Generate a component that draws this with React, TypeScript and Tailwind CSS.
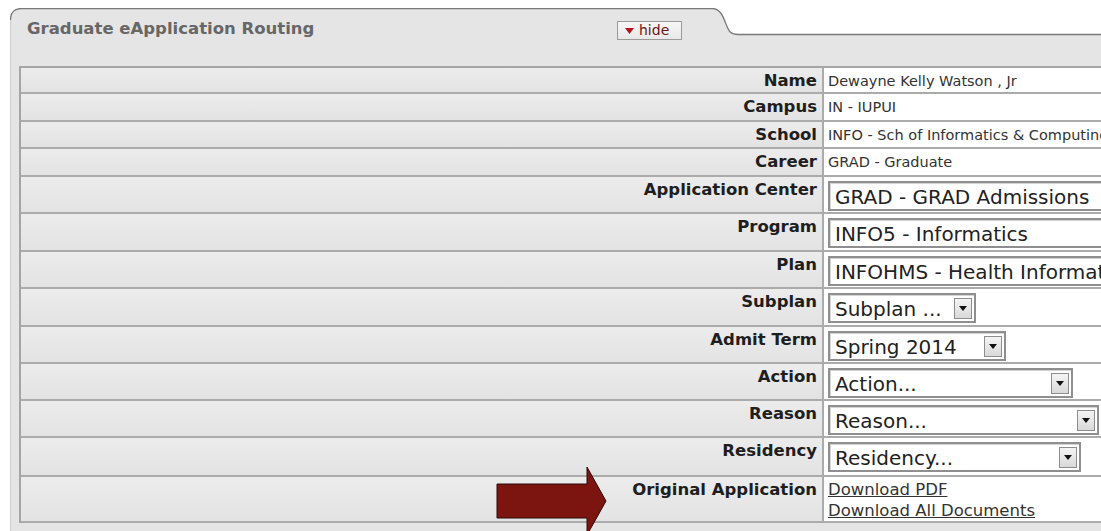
import React from "react";

type Row = {
  label: string;
  height: string;
  kind: "text" | "select" | "links";
  value?: string;
  selectWidth?: string;
};

const rows: Row[] = [
  { label: "Name", height: "h-[26px]", kind: "text", value: "Dewayne Kelly Watson , Jr" },
  { label: "Campus", height: "h-[28px]", kind: "text", value: "IN - IUPUI" },
  { label: "School", height: "h-[27px]", kind: "text", value: "INFO - Sch of Informatics & Computing" },
  { label: "Career", height: "h-[28px]", kind: "text", value: "GRAD - Graduate" },
  { label: "Application Center", height: "h-[37px]", kind: "select", value: "GRAD - GRAD Admissions", selectWidth: "w-[320px]" },
  { label: "Program", height: "h-[38px]", kind: "select", value: "INFO5 - Informatics", selectWidth: "w-[320px]" },
  { label: "Plan", height: "h-[37px]", kind: "select", value: "INFOHMS - Health Informatics", selectWidth: "w-[320px]" },
  { label: "Subplan", height: "h-[38px]", kind: "select", value: "Subplan ...", selectWidth: "w-[148px]" },
  { label: "Admit Term", height: "h-[37px]", kind: "select", value: "Spring 2014", selectWidth: "w-[178px]" },
  { label: "Action", height: "h-[37px]", kind: "select", value: "Action...", selectWidth: "w-[245px]" },
  { label: "Reason", height: "h-[37px]", kind: "select", value: "Reason...", selectWidth: "w-[271px]" },
  { label: "Residency", height: "h-[39px]", kind: "select", value: "Residency...", selectWidth: "w-[253px]" },
  { label: "Original Application", height: "h-[46px]", kind: "links" },
];

function DropArrow() {
  return (
    <div className="flex h-[21px] w-[18px] shrink-0 items-center justify-center border border-[#8d8d8d] bg-gradient-to-b from-[#f4f4f4] to-[#d9d9d9]">
      <svg width="8" height="5" viewBox="0 0 8 5">
        <path d="M0 0 L8 0 L4 5 Z" fill="#111" />
      </svg>
    </div>
  );
}

function SelectBox({ value, width }: { value: string; width: string }) {
  return (
    <div
      className={`${width} flex h-[30px] items-center justify-between overflow-hidden border-2 border-[#8f8f8f] bg-white pl-[5px] pr-[2px] shadow-[inset_1px_1px_0_#d4d4d4]`}
    >
      <span className="whitespace-nowrap pt-[2px] text-[20px] leading-[24px] text-[#222]">{value}</span>
      <DropArrow />
    </div>
  );
}

function RoutingRow({ row }: { row: Row }) {
  return (
    <div className={`flex ${row.height}`}>
      <div className="w-[801px] shrink-0 border-b-2 border-[#ababab] bg-gradient-to-b from-[#ececec] to-[#e3e3e3] pr-[5px] pt-[3px] text-right text-[16.5px] font-bold leading-[20px] text-[#1e1e1e]">
        {row.label}
      </div>
      <div className="w-[320px] shrink-0 overflow-hidden border-b-2 border-l-2 border-[#ababab] bg-white pl-[4px]">
        {row.kind === "text" && (
          <div className="whitespace-nowrap pt-[4px] text-[14.5px] leading-[18px] text-[#333]">{row.value}</div>
        )}
        {row.kind === "select" && (
          <div className="pt-[4px]">
            <SelectBox value={row.value ?? ""} width={row.selectWidth ?? "w-[200px]"} />
          </div>
        )}
        {row.kind === "links" && (
          <div className="flex flex-col items-start pt-[2px] text-[16.5px] leading-[21px] text-[#333]">
            <a href="#" className="underline">Download PDF</a>
            <a href="#" className="underline">Download All Documents</a>
          </div>
        )}
      </div>
    </div>
  );
}

export default function App() {
  return (
    <div
      className="relative h-[531px] w-[1101px] overflow-hidden bg-white"
      style={{ fontFamily: '"DejaVu Sans", Verdana, sans-serif' }}
    >
      <div className="relative ml-[10px] mt-[8px] h-[523px] rounded-tl-[12px] border-l border-[#cdcdcd] bg-[#e5e5e5]">
        {/* tab outline with the notch on the right */}
        <svg
          className="pointer-events-none absolute left-[-1px] top-0"
          width="1092"
          height="30"
          viewBox="0 0 1092 30"
        >
          <path d="M702 0 C710 0 713 8 716 16 C719 24 721 27 728 27 L1092 27 L1092 0 Z" fill="#fff" />
          <path
            d="M0.5 12 Q0.5 0.5 12 0.5 L702 0.5 C710 0.5 713 8 716 16 C719 24 721 26.5 728 26.5 L1092 26.5"
            fill="none"
            stroke="#7a7a7a"
            strokeWidth="1.3"
          />
        </svg>

        <div className="relative flex h-[58px] items-start pl-[16px] pt-[11px]">
          <div className="w-[590px] text-[16.5px] font-bold leading-[20px] text-[#676767]">
            Graduate eApplication Routing
          </div>
          <button className="mt-[2px] flex h-[19px] w-[65px] items-center gap-[5px] border border-[#9a9a9a] bg-gradient-to-b from-[#f7f7f7] to-[#e8e8e8] pl-[7px] text-[14px] leading-[17px] text-[#6b1515]">
            <svg width="9" height="6" viewBox="0 0 9 6">
              <path d="M0 0 L9 0 L4.5 6 Z" fill="#b3121b" />
            </svg>
            hide
          </button>
        </div>

        <div className="ml-[8px] border-l-2 border-t-2 border-[#a5a5a5]">
          {rows.map((row) => (
            <RoutingRow key={row.label} row={row} />
          ))}
        </div>
      </div>

      {/* pointer arrow next to the documents */}
      <svg className="absolute left-0 top-0" width="1101" height="531" viewBox="0 0 1101 531">
        <path
          d="M497 484 L587 484 L587 467 L606 501 L587 535 L587 518 L497 518 Z"
          fill="#7c1410"
          stroke="#2a0a08"
          strokeWidth="1"
        />
      </svg>
    </div>
  );
}
